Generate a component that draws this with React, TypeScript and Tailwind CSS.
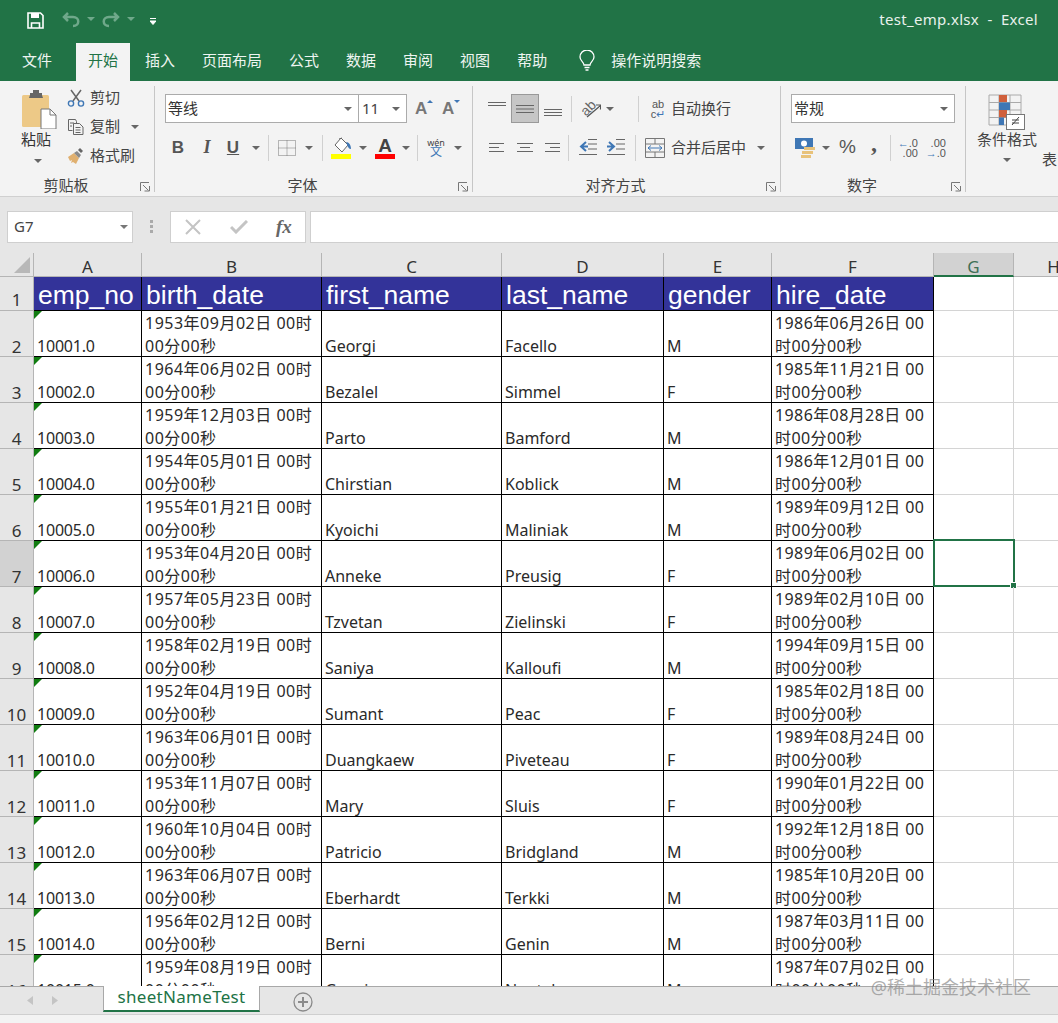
const rows: [string, string, string, string, string, string, string, string, string][] = [
  ["2", "10001.0", "1953年09月02日 00时", "00分00秒", "Georgi", "Facello", "M", "1986年06月26日 00", "时00分00秒"],
  ["3", "10002.0", "1964年06月02日 00时", "00分00秒", "Bezalel", "Simmel", "F", "1985年11月21日 00", "时00分00秒"],
  ["4", "10003.0", "1959年12月03日 00时", "00分00秒", "Parto", "Bamford", "M", "1986年08月28日 00", "时00分00秒"],
  ["5", "10004.0", "1954年05月01日 00时", "00分00秒", "Chirstian", "Koblick", "M", "1986年12月01日 00", "时00分00秒"],
  ["6", "10005.0", "1955年01月21日 00时", "00分00秒", "Kyoichi", "Maliniak", "M", "1989年09月12日 00", "时00分00秒"],
  ["7", "10006.0", "1953年04月20日 00时", "00分00秒", "Anneke", "Preusig", "F", "1989年06月02日 00", "时00分00秒"],
  ["8", "10007.0", "1957年05月23日 00时", "00分00秒", "Tzvetan", "Zielinski", "F", "1989年02月10日 00", "时00分00秒"],
  ["9", "10008.0", "1958年02月19日 00时", "00分00秒", "Saniya", "Kalloufi", "M", "1994年09月15日 00", "时00分00秒"],
  ["10", "10009.0", "1952年04月19日 00时", "00分00秒", "Sumant", "Peac", "F", "1985年02月18日 00", "时00分00秒"],
  ["11", "10010.0", "1963年06月01日 00时", "00分00秒", "Duangkaew", "Piveteau", "F", "1989年08月24日 00", "时00分00秒"],
  ["12", "10011.0", "1953年11月07日 00时", "00分00秒", "Mary", "Sluis", "F", "1990年01月22日 00", "时00分00秒"],
  ["13", "10012.0", "1960年10月04日 00时", "00分00秒", "Patricio", "Bridgland", "M", "1992年12月18日 00", "时00分00秒"],
  ["14", "10013.0", "1963年06月07日 00时", "00分00秒", "Eberhardt", "Terkki", "M", "1985年10月20日 00", "时00分00秒"],
  ["15", "10014.0", "1956年02月12日 00时", "00分00秒", "Berni", "Genin", "M", "1987年03月11日 00", "时00分00秒"],
  ["16", "10015.0", "1959年08月19日 00时", "00分00秒", "Guoxiang", "Nooteboom", "M", "1987年07月02日 00", "时00分00秒"],
];

const gridCols = "grid grid-cols-[34px_108px_180px_180px_162px_108px_162px_80px_80px]";

function Chevron({ color = "#666" }: { color?: string }) {
  return (
    <svg width="8" height="4" viewBox="0 0 8 4" className="shrink-0">
      <path d="M0 0h8L4 4z" fill={color} />
    </svg>
  );
}

function Launcher() {
  return (
    <svg width="10" height="10" viewBox="0 0 10 10" className="absolute right-[4px] bottom-[0px]" fill="none" stroke="#777">
      <path d="M.5 9V.5H9" />
      <path d="M3 3l5.5 5.5M4.5 9h5V4" />
    </svg>
  );
}

function Sep({ className }: { className: string }) {
  return <div className={"w-px bg-[#d0d0d0] " + className} />;
}

function AlignLines({ d }: { d: string }) {
  return (
    <svg width="20" height="20" viewBox="0 0 20 20" fill="none" stroke="#666">
      <path d={d} />
    </svg>
  );
}

function Group({ width, label, children }: { width: string; label: string; children: React.ReactNode }) {
  return (
    <div className={"relative h-[106px] shrink-0 flex flex-col border-r border-[#c6c6c6] " + width}>
      <div className="flex-1 min-h-0">{children}</div>
      <div className="h-[14px] pr-[22px] leading-[14px] text-[15px] text-center text-[#444]">{label}</div>
      <Launcher />
    </div>
  );
}

function ClipboardGroup() {
  return (
    <Group width="w-[155px]" label="剪贴板">
      <div className="flex">
        <div className="w-[67px] pl-[21px] pt-[4px] flex flex-col">
          <svg width="36" height="39" viewBox="0 0 36 39">
            <rect x="1" y="5" width="27" height="32" rx="1.5" fill="#edc987" />
            <path d="M9 5V3h3V0h6v3h3v2l1 3H8z" fill="#666" />
            <path d="M20 19h9l6 6v14H20z" fill="#fff" stroke="#777" />
            <path d="M29 19v6h6" fill="none" stroke="#777" />
          </svg>
          <div className="-mt-[1px] text-[15px] leading-[22px] text-[#333]">粘贴</div>
          <div className="mt-[9px] ml-[13px]"><Chevron /></div>
        </div>
        <div className="-mt-[3px] flex flex-col text-[15px] text-[#444]">
          <div className="h-[29px] flex items-center">
            <svg width="18" height="18" viewBox="0 0 18 18" fill="none" className="mr-[5px]">
              <path d="M4 1l8 11M14 1L6 12" stroke="#666" strokeWidth="1.5" />
              <circle cx="4" cy="14.5" r="2.6" stroke="#3f77b5" strokeWidth="1.4" />
              <circle cx="14" cy="14.5" r="2.6" stroke="#3f77b5" strokeWidth="1.4" />
            </svg>
            剪切
          </div>
          <div className="h-[29px] flex items-center">
            <svg width="18" height="18" viewBox="0 0 18 18" fill="none" stroke="#666" className="mr-[5px]">
              <path d="M1.500 1.500h7l1 2v2M1.500 1.500v11h4" />
              <path d="M6.500 5.500h6l3.500 3.500v7.500h-9.500z" fill="#f3f3f3" />
              <path d="M8.500 9.500h5M8.500 12h5M8.500 14.500h5M3 5h4M3 8h2" />
            </svg>
            复制
            <span className="ml-[11px]"><Chevron /></span>
          </div>
          <div className="h-[29px] flex items-center">
            <svg width="18" height="18" viewBox="0 0 18 18" className="mr-[5px]">
              <path d="M1 10l6-4 5 5-3 6-3-2-2 1 1-3-2 1z" fill="#e0b070" />
              <path d="M7 6l5 5 2-3-4-4z" fill="#8a8a8a" />
              <path d="M11 3l2-2 3 3-2 2z" fill="#666" />
            </svg>
            格式刷
          </div>
        </div>
      </div>
    </Group>
  );
}

function FontGroup() {
  return (
    <Group width="w-[318px]" label="字体">
      <div className="pt-[8px] pl-[10px] flex items-center">
        <div className="w-[194px] h-[29px] bg-white border border-[#ababab] flex items-center pl-[2px] pr-[6px] text-[15px] text-[#333]">
          <span className="flex-1">等线</span>
          <Chevron />
        </div>
        <div className="-ml-px w-[49px] h-[29px] bg-white border border-[#ababab] flex items-center pl-[3px] pr-[6px] text-[15px] text-[#444]">
          <span className="flex-1">11</span>
          <Chevron />
        </div>
        <div className="ml-[8px] w-[18px] h-[22px] relative text-[17px] leading-[22px] text-[#777] font-['Liberation_Sans'] font-bold">
          A
          <svg width="6" height="3" viewBox="0 0 6 3" className="absolute right-0 top-[2px]"><path d="M0 3l3-3 3 3z" fill="#3f77b5" /></svg>
        </div>
        <div className="ml-[9px] w-[18px] h-[22px] relative text-[17px] leading-[22px] text-[#777] font-['Liberation_Sans'] font-bold">
          A
          <svg width="6" height="3" viewBox="0 0 6 3" className="absolute right-0 top-[2px]"><path d="M0 0l3 3 3-3z" fill="#3f77b5" /></svg>
        </div>
      </div>
      <div className="mt-[10px] pl-[10px] h-[29px] flex items-center text-[#555] font-['Liberation_Sans']">
        <div className="w-[26px] text-center text-[17px] font-bold">B</div>
        <div className="w-[29px] text-center text-[18px] italic font-bold font-['Liberation_Serif'] pl-[3px]">I</div>
        <div className="w-[26px] text-center text-[17px] font-bold underline">U</div>
        <div className="w-[20px] flex justify-center"><Chevron /></div>
        <Sep className="ml-[2px] h-[26px]" />
        <svg width="18" height="16" viewBox="0 0 18 16" fill="none" stroke="#777" strokeDasharray="1 1" className="ml-[9px]">
          <path d="M.5.5h17v15H.5zM9 .5v15M.5 8h17" />
        </svg>
        <div className="w-[26px] flex justify-center"><Chevron /></div>
        <Sep className="h-[26px]" />
        <svg width="21" height="22" viewBox="0 0 21 22" className="ml-[8px]">
          <path d="M10 1l7 7-6 7-7-7z" fill="#fff" stroke="#666" />
          <path d="M8 2l3-1" stroke="#666" fill="none" />
          <path d="M15 5c3 0 5 3 5 7-2 0-2-1-3-2-1-2-1-3-2-5z" fill="#3f77b5" />
          <rect x="0" y="17" width="20" height="5" fill="#ffff00" />
        </svg>
        <div className="w-[22px] flex justify-center"><Chevron /></div>
        <div className="w-[22px] ml-0 flex flex-col items-center">
          <span className="text-[19px] leading-[17px] font-bold text-[#444]">A</span>
          <span className="block w-[20px] h-[5px] bg-[#ff0000]" />
        </div>
        <div className="w-[20px] flex justify-center"><Chevron /></div>
        <Sep className="ml-[1px] h-[26px]" />
        <div className="ml-[9px] w-[18px] flex flex-col items-center leading-none font-['Noto_Sans','Noto_Sans_CJK_SC',sans-serif]">
          <span className="text-[9px] text-[#444]">wén</span>
          <span className="text-[12px] -mt-[1px] text-[#3f77b5]">文</span>
        </div>
        <div className="ml-[9px]"><Chevron /></div>
      </div>
    </Group>
  );
}

function AlignGroup() {
  return (
    <Group width="w-[308px]" label="对齐方式">
      <div className="h-[29px] mt-[8px] pl-[14px] flex items-center text-[15px] text-[#444]">
        <AlignLines d="M1 3.500h18M1 6.500h18" />
        <div className="ml-[4px] w-[28px] h-[29px] bg-[#c6c6c6] border border-[#999] flex items-center justify-center">
          <AlignLines d="M1 6.500h18M1 10h18M1 13.500h18" />
        </div>
        <span className="ml-[4px]"><AlignLines d="M1 10.500h18M1 13.500h18M1 16.500h18" /></span>
        <Sep className="ml-[8px] h-[26px]" />
        <svg width="20" height="20" viewBox="0 0 20 20" fill="none" className="ml-[9px]">
          <text x="0" y="14" fontSize="14" fill="#666" fontFamily="Liberation Sans" transform="rotate(-45 7 10)">ab</text>
          <path d="M6 18L19 7M15 6h4.500v4.500" stroke="#555" strokeWidth="1.200" />
        </svg>
        <span className="ml-[5px]"><Chevron /></span>
        <Sep className="ml-[24px] h-[26px]" />
        <div className="ml-[10px] w-[18px] flex flex-col items-center text-[#555] text-[11px] leading-[10px] font-['Liberation_Sans']">
          <span>ab</span>
          <span className="flex items-center">c<span className="text-[#3f77b5]">↵</span></span>
        </div>
        <span className="ml-[4px]">自动换行</span>
      </div>
      <div className="h-[29px] mt-[10px] pl-[14px] flex items-center text-[15px] text-[#444]">
        <AlignLines d="M2 5.500h15M2 9.500h10M2 13.500h15" />
        <span className="ml-[8px]"><AlignLines d="M2 5.500h16M5 9.500h10M2 13.500h16" /></span>
        <span className="ml-[8px]"><AlignLines d="M2 5.500h15M7 9.500h10M2 13.500h15" /></span>
        <Sep className="ml-[5px] h-[26px]" />
        <svg width="20" height="20" viewBox="0 0 20 20" fill="none" className="ml-[9px]">
          <path d="M10 1.500h9M10 6h9M10 11h9M1 16.500h18" stroke="#666" />
          <path d="M8 4L3 8.500 8 13M3 8.500h7" stroke="#3f77b5" strokeWidth="2" />
        </svg>
        <svg width="20" height="20" viewBox="0 0 20 20" fill="none" className="ml-[8px]">
          <path d="M10 1.500h9M10 6h9M10 11h9M1 16.500h18" stroke="#666" />
          <path d="M3 4l5 4.500L3 13M8 8.500H1" stroke="#3f77b5" strokeWidth="2" />
        </svg>
        <Sep className="ml-[9px] h-[26px]" />
        <svg width="20" height="20" viewBox="0 0 20 20" fill="none" className="ml-[9px]">
          <path d="M.5.5h19v19H.5zM.5 6h19M.5 14h19M10 .5V6M10 14v5.500" stroke="#777" />
          <path d="M3 10h14M6 7.500L3 10l3 2.500M14 7.500l3 2.500-3 2.500" stroke="#3f77b5" />
        </svg>
        <span className="ml-[6px]">合并后居中</span>
        <span className="ml-[11px]"><Chevron /></span>
      </div>
    </Group>
  );
}

function NumberGroup() {
  return (
    <Group width="w-[185px]" label="数字">
      <div className="pt-[8px] pl-[10px]">
        <div className="w-[164px] h-[29px] bg-white border border-[#ababab] flex items-center pl-[2px] pr-[6px] text-[15px] text-[#333]">
          <span className="flex-1">常规</span>
          <Chevron />
        </div>
      </div>
      <div className="mt-[10px] pl-[14px] h-[29px] flex items-center text-[#555]">
        <svg width="21" height="22" viewBox="0 0 21 22">
          <rect x="0" y="1" width="18" height="11" fill="#3f77b5" />
          <circle cx="9" cy="6.500" r="3" fill="#fff" />
          <rect x="9" y="10" width="11" height="3" fill="#e8c27a" />
          <rect x="7" y="14" width="11" height="3" fill="#e8c27a" />
          <rect x="6" y="18" width="10" height="3" fill="#e8c27a" />
        </svg>
        <span className="ml-[6px]"><Chevron /></span>
        <span className="ml-[9px] text-[19px] font-['Liberation_Sans']">%</span>
        <span className="ml-[15px] w-[6px] text-[24px] font-bold font-['Liberation_Serif'] leading-none -mt-[10px]">,</span>
        <Sep className="ml-[13px] h-[26px]" />
        <div className="ml-[10px] w-[17px] flex flex-col items-end text-[11px] leading-[10px] font-['Liberation_Sans']">
          <span><span className="text-[#3f77b5] font-bold">←</span>.0</span>
          <span>.00</span>
        </div>
        <div className="ml-[11px] w-[17px] flex flex-col items-end text-[11px] leading-[10px] font-['Liberation_Sans']">
          <span>.00</span>
          <span><span className="text-[#3f77b5] font-bold">→</span>.0</span>
        </div>
      </div>
    </Group>
  );
}

function StylesGroup() {
  return (
    <div className="flex flex-col items-center w-[60px] ml-[11px] pt-[8px] text-[#444] shrink-0 relative">
      <svg width="38" height="36" viewBox="0 0 38 36" fill="none">
        <path d="M1 1h32v30H1zM1 8.500h32M1 16h32M1 23.500h32M11 1v30M22 1v30" stroke="#aaa" />
        <rect x="11" y="1" width="8" height="7" fill="#d0603c" />
        <rect x="11" y="8.500" width="11" height="7.500" fill="#3f77b5" />
        <rect x="11" y="16" width="8" height="7.500" fill="#d0603c" />
        <rect x="11" y="23.500" width="5" height="7.500" fill="#3f77b5" />
        <rect x="18.500" y="20.500" width="18" height="15" fill="#fff" stroke="#777" />
        <path d="M24 31l7-8M24 26h7M24 29h7" stroke="#444" />
      </svg>
      <div className="-mt-[1px] text-[15px] leading-[20px] whitespace-nowrap">条件格式</div>
      <div className="mt-[9px]"><Chevron /></div>
    </div>
  );
}

function ColHead({ letter, active }: { letter: string; active?: boolean }) {
  return (
    <div className={active
      ? "h-[24px] bg-[#d2d2d2] border-r border-[#b5b5b5] border-b-2 border-b-[#217346] text-center text-[17px] leading-[27px] text-[#3f6f56]"
      : "h-[24px] bg-[#e6e6e6] border-r border-[#b5b5b5] border-b border-b-[#b5b5b5] text-center text-[17px] leading-[27px] text-[#333]"}>
      {letter}
    </div>
  );
}

function HeaderCell({ children }: { children: string }) {
  return (
    <div className="h-[34px] bg-[#333399] border-r border-b border-black pl-[4px] text-white text-[26.500px] leading-[36px] font-['Liberation_Sans'] overflow-hidden whitespace-nowrap">
      {children}
    </div>
  );
}

function Cell({ children, tracking }: { children: React.ReactNode; tracking?: string }) {
  return (
    <div className={"h-[46px] bg-white border-r border-b border-black pl-[3px] flex flex-col justify-end text-[16px] leading-[23px] text-[#2a2a2a] whitespace-nowrap " + (tracking || "")}>
      <div className="translate-y-[2px]">{children}</div>
    </div>
  );
}

function Sheet() {
  return (
    <div className="h-[733px] overflow-hidden bg-white">
      <div className={gridCols}>
        <div className="h-[24px] bg-[#e6e6e6] border-r border-b border-[#b5b5b5] flex items-end justify-end p-[3px]">
          <svg width="16" height="16" viewBox="0 0 16 16"><path d="M16 0v16H0z" fill="#b8b8b8" /></svg>
        </div>
        {["A", "B", "C", "D", "E", "F"].map((c) => <ColHead key={c} letter={c} />)}
        <ColHead letter="G" active />
        <ColHead letter="H" />

        <div className="h-[34px] bg-[#e6e6e6] border-r border-b border-[#b5b5b5] flex items-end justify-center text-[17px] leading-[20px] text-[#333]">1</div>
        {["emp_no", "birth_date", "first_name", "last_name", "gender", "hire_date"].map((h) => <HeaderCell key={h}>{h}</HeaderCell>)}
        <div className="h-[34px] border-r border-b border-[#d4d4d4]" />
        <div className="h-[34px] border-b border-[#d4d4d4]" />

        {rows.map((r) => {
          const selected = r[0] === "7";
          return [
            <div key={r[0] + "h"} className={"h-[46px] border-r border-b border-[#b5b5b5] flex items-end justify-center text-[17px] leading-[18px] text-[#333] " + (selected ? "bg-[#d2d2d2]" : "bg-[#e6e6e6]")}>
              {r[0]}
            </div>,
            <div key={r[0] + "a"} className="relative">
              <Cell tracking="tracking-[-0.2px]">{r[1]}</Cell>
              <svg width="8" height="8" viewBox="0 0 8 8" className="absolute left-0 top-0"><path d="M0 0h8L0 8z" fill="#107c10" /></svg>
            </div>,
            <Cell key={r[0] + "b"} tracking="tracking-[0.5px]"><div>{r[2]}</div><div>{r[3]}</div></Cell>,
            <Cell key={r[0] + "c"}>{r[4]}</Cell>,
            <Cell key={r[0] + "d"}>{r[5]}</Cell>,
            <Cell key={r[0] + "e"}>{r[6]}</Cell>,
            <Cell key={r[0] + "f"} tracking="tracking-[0.4px]"><div>{r[7]}</div><div>{r[8]}</div></Cell>,
            <div key={r[0] + "g"} className="relative h-[46px] border-r border-b border-[#d4d4d4]">
              {selected && (
                <div className="absolute -left-[1px] -top-[2px] -right-[2px] -bottom-[1px] border-2 border-[#217346]">
                  <div className="absolute -right-[4px] -bottom-[4px] w-[7px] h-[7px] bg-[#217346] border border-white" />
                </div>
              )}
            </div>,
            <div key={r[0] + "x"} className="h-[46px] border-b border-[#d4d4d4]" />,
          ];
        })}
      </div>
    </div>
  );
}

export default function App() {
  return (
    <div className="relative w-[1058px] h-[1023px] overflow-hidden bg-[#e6e6e6] font-['Noto_Sans','Noto_Sans_CJK_SC',sans-serif]">
      {/* title bar */}
      <div className="h-[43px] bg-[#217346] flex items-center text-white">
        <svg width="17" height="17" viewBox="0 0 17 17" fill="none" className="ml-[27px] -mt-[3px]">
          <path d="M1 1h12.500L16 3.500V16H1z" stroke="#fff" strokeWidth="1.600" />
          <rect x="4" y="1" width="8" height="5" fill="#fff" />
          <path d="M4.500 16v-5h8v5" stroke="#fff" strokeWidth="1.600" />
        </svg>
        <svg width="18" height="16" viewBox="0 0 18 16" fill="none" stroke="#6fa88a" strokeWidth="2.500" className="ml-[18px] -mt-[3px]">
          <path d="M6 1L2 5l4 4M2 5h9c7 0 7 9 0 9" />
        </svg>
        <span className="ml-[7px] -mt-[6px]"><Chevron color="#6fa88a" /></span>
        <svg width="18" height="16" viewBox="0 0 18 16" fill="none" stroke="#6fa88a" strokeWidth="2.500" className="ml-[7px] -mt-[3px]">
          <path d="M12 1l4 4-4 4M16 5H7c-7 0-7 9 0 9" />
        </svg>
        <span className="ml-[7px] -mt-[6px]"><Chevron color="#6fa88a" /></span>
        <svg width="6" height="7" viewBox="0 0 6 7" className="ml-[15px] -mt-[1px]">
          <path d="M0 .500h6M0 3h6L3 6.500z" stroke="#fff" fill="#fff" strokeWidth="1" />
        </svg>
        <div className="ml-auto mr-[20px] -mt-[5px] text-[15px] tracking-[0.3px] text-[#e8f1ec] whitespace-pre">test_emp.xlsx  -  Excel</div>
      </div>

      {/* tabs */}
      <div className="h-[38px] bg-[#217346] flex items-stretch text-[15px] text-[#eef5f1]">
        <div className="ml-[22px] pb-[3px] flex items-center">文件</div>
        <div className="ml-[24px] px-[12px] pb-[3px] bg-[#f3f3f3] text-[#217346] flex items-center">开始</div>
        <div className="ml-[15px] pb-[3px] flex items-center gap-[27px]">
          <span>插入</span>
          <span>页面布局</span>
          <span>公式</span>
          <span>数据</span>
          <span>审阅</span>
          <span>视图</span>
          <span>帮助</span>
        </div>
        <div className="ml-[32px] pb-[3px] flex items-center">
          <svg width="16" height="22" viewBox="0 0 16 22" fill="none" stroke="#fff" strokeWidth="1.300">
            <path d="M5 15c0-3-4-4-4-8a7 7 0 0114 0c0 4-4 5-4 8zM5.500 17.500h5M6.500 20h3" />
          </svg>
          <span className="ml-[16px]">操作说明搜索</span>
        </div>
      </div>

      {/* ribbon */}
      <div className="h-[116px] bg-[#f3f3f3] border-b border-[#d0d0d0] flex pt-[5px] overflow-hidden">
        <ClipboardGroup />
        <FontGroup />
        <AlignGroup />
        <NumberGroup />
        <StylesGroup />
        <div className="ml-[5px] mt-[62px] text-[15px] text-[#444] shrink-0">表</div>
      </div>

      {/* formula bar */}
      <div className="h-[56px] flex items-center pt-[3px] pl-[7px]">
        <div className="w-[126px] h-[32px] bg-white border border-[#cfcfcf] flex items-center pl-[6px] pr-[4px] text-[15px] text-[#444]">
          <span className="flex-1">G7</span>
          <Chevron color="#777" />
        </div>
        <div className="ml-[17px] flex flex-col gap-[2px]">
          <span className="block w-[3px] h-[3px] bg-[#aaa]" />
          <span className="block w-[3px] h-[3px] bg-[#aaa]" />
          <span className="block w-[3px] h-[3px] bg-[#aaa]" />
        </div>
        <div className="ml-[17px] w-[136px] h-[32px] bg-white border border-[#cfcfcf] flex items-center text-[#bbb]">
          <svg width="16" height="16" viewBox="0 0 16 16" fill="none" stroke="#c4c4c4" strokeWidth="2" className="ml-[14px]">
            <path d="M1 1l14 14M15 1L1 15" />
          </svg>
          <svg width="18" height="14" viewBox="0 0 18 14" fill="none" stroke="#c4c4c4" strokeWidth="3" className="ml-[29px]">
            <path d="M1 7l5 5L17 1" />
          </svg>
          <span className="ml-[28px] text-[19px] leading-none italic font-bold text-[#666] font-['Liberation_Serif']">fx</span>
        </div>
        <div className="ml-[4px] flex-1 h-[32px] bg-white border-y border-l border-[#cfcfcf]" />
      </div>

      <Sheet />

      {/* sheet tabs */}
      <div className="h-[29px] bg-[#e6e6e6] border-t border-[#a8a8a8] border-b border-b-[#cfcfcf] flex items-start">
        <div className="ml-[27px] mt-[9px] flex gap-[19px]">
          <svg width="6" height="9" viewBox="0 0 6 9"><path d="M6 0v9L0 4.500z" fill="#c4c4c4" /></svg>
          <svg width="6" height="9" viewBox="0 0 6 9"><path d="M0 0v9l6-4.500z" fill="#c4c4c4" /></svg>
        </div>
        <div className="ml-[45px] -mt-px w-[157px] h-[26px] bg-white border-x border-[#a8a8a8] border-b-2 border-b-[#217346] text-center text-[#217346] text-[17px] leading-[22px] tracking-[0.3px]">
          sheetNameTest
        </div>
        <svg width="20" height="20" viewBox="0 0 20 20" fill="none" stroke="#8a8a8a" strokeWidth="1.300" className="ml-[33px] mt-[5px]">
          <circle cx="10" cy="10" r="9" />
          <path d="M10 5v10M5 10h10" strokeWidth="2" />
        </svg>
      </div>
      <div className="h-[8px] bg-[#f3f3f3]" />

      <div className="absolute right-[27px] top-[975px] text-[18px] leading-[24px] text-[#8a8a8a]/70 whitespace-nowrap">@稀土掘金技术社区</div>
    </div>
  );
}
